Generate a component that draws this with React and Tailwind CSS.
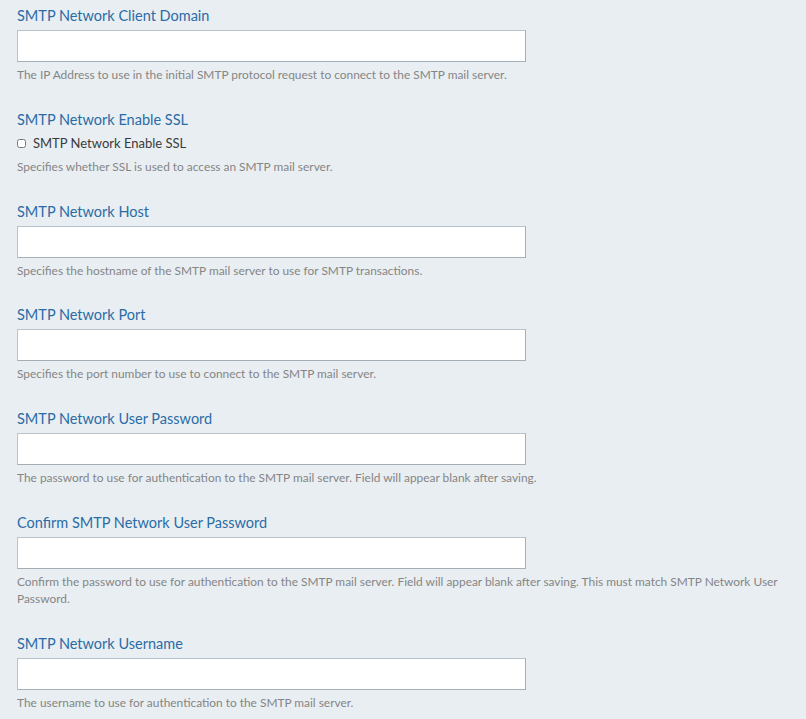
import React from 'react';

const fields = [
    {
        id: 'clientDomain',
        label: 'SMTP Network Client Domain',
        help: 'The IP Address to use in the initial SMTP protocol request to connect to the SMTP mail server.',
    },
    {
        id: 'enableSsl',
        label: 'SMTP Network Enable SSL',
        type: 'checkbox',
        help: 'Specifies whether SSL is used to access an SMTP mail server.',
    },
    {
        id: 'host',
        label: 'SMTP Network Host',
        help: 'Specifies the hostname of the SMTP mail server to use for SMTP transactions.',
    },
    {
        id: 'port',
        label: 'SMTP Network Port',
        help: 'Specifies the port number to use to connect to the SMTP mail server.',
    },
    {
        id: 'password',
        label: 'SMTP Network User Password',
        type: 'password',
        help: 'The password to use for authentication to the SMTP mail server. Field will appear blank after saving.',
    },
    {
        id: 'confirmPassword',
        label: 'Confirm SMTP Network User Password',
        type: 'password',
        help: 'Confirm the password to use for authentication to the SMTP mail server. Field will appear blank after saving. This must match SMTP Network User Password.',
    },
    {
        id: 'username',
        label: 'SMTP Network Username',
        help: 'The username to use for authentication to the SMTP mail server.',
    },
];

function Field({ field }) {
    return (
        <div className="mb-[26.75px]">
            <label htmlFor={field.id} className="block text-[14.5px] leading-5 text-[#2a6ca6] mb-1">
                {field.label}
            </label>
            {field.type === 'checkbox' ? (
                <label className="flex items-center gap-[7px] h-[20px] text-[13px] text-[#3a3a3a]">
                    <input id={field.id} type="checkbox" className="w-[9px] h-[9px] m-0" />
                    {field.label}
                </label>
            ) : (
                <input
                    id={field.id}
                    type={field.type || 'text'}
                    className="block w-[509px] h-[32px] bg-white border border-[#b9c3cc] border-b-[#a5afb8] border-r-[#a5afb8] outline-none px-2 text-[13px]"
                />
            )}
            <p className="mt-[4px] text-[11.9px] leading-[17px] text-[#858585] pr-2">{field.help}</p>
        </div>
    );
}

export default function App() {
    return (
        <div className="min-h-screen bg-[#e9eef2] pl-[17px] pt-[6px]" style={{ fontFamily: 'Lato, "Noto Sans", sans-serif' }}>
            {fields.map((f) => (
                <Field key={f.id} field={f} />
            ))}
        </div>
    );
}
